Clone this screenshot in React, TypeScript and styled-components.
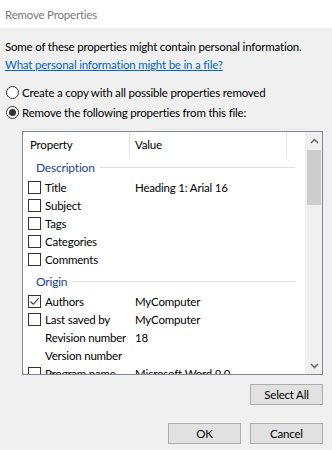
import React from "react";
import styled, { createGlobalStyle } from "styled-components";

const Global = createGlobalStyle`
  html, body { margin: 0; padding: 0; background: #f0f0f0; }
  body { font-family: Lato, "Open Sans", sans-serif; font-size: 11.5px; letter-spacing: -0.2px; color: #000; }
  * { box-sizing: border-box; }
`;

const Window = styled.div`
  width: 332px;
  height: 450px;
  display: flex;
  flex-direction: column;
  background: #f0f0f0;
  overflow: hidden;
`;

const TitleBar = styled.div`
  height: 28px;
  flex: none;
  background: #fff;
  color: #7a7a7a;
  font-size: 11.5px;
  display: flex;
  align-items: center;
  padding-left: 5px;
`;

const Body = styled.div`
  flex: 1;
  display: flex;
  flex-direction: column;
  padding: 10px 9px 0 5px;
`;

const Line = styled.div`
  line-height: 18px;
  height: 18px;
  white-space: nowrap;
`;

const Link = styled.a`
  color: #0066cc;
  text-decoration: underline;
  line-height: 18px;
  height: 18px;
  cursor: pointer;
`;

const Radios = styled.div`
  display: flex;
  flex-direction: column;
  gap: 2px;
  margin-top: 9px;
`;

const RadioRow = styled.label`
  display: flex;
  align-items: center;
  height: 18px;
  gap: 3px;
  padding-left: 1px;
`;

const RadioCircle = styled.span<{ $on?: boolean }>`
  width: 13px;
  height: 13px;
  border-radius: 50%;
  border: 1px solid #333;
  background: #fff;
  display: flex;
  align-items: center;
  justify-content: center;
  &::after {
    content: "";
    width: 7px;
    height: 7px;
    border-radius: 50%;
    background: ${(p) => (p.$on ? "#333" : "transparent")};
  }
`;

const ListBox = styled.div`
  margin: 10px 0 0 17px;
  height: 244px;
  border: 1px solid #828790;
  background: #fff;
  display: flex;
  overflow: hidden;
`;

const ListContent = styled.div`
  flex: 1;
  display: flex;
  flex-direction: column;
  overflow: hidden;
`;

const Header = styled.div`
  height: 25px;
  flex: none;
  display: flex;
`;

const HeaderCell = styled.div<{ $w: number }>`
  width: ${(p) => p.$w}px;
  flex: none;
  padding-left: ${(p) => (p.$w > 110 ? 5 : 7)}px;
  display: flex;
  align-items: center;
  border-right: 1px solid #e5e5e5;
`;

const Group = styled.div<{ $mt?: number }>`
  display: flex;
  align-items: center;
  height: 21px;
  flex: none;
  margin-top: ${(p) => p.$mt ?? 0}px;
  padding: 0 10px 0 13px;
  gap: 5px;
  color: #1e3e94;
  font-size: 12px;
  &::after {
    content: "";
    flex: 1;
    height: 1px;
    background: #e0e0e0;
  }
`;

const Row = styled.div`
  display: flex;
  align-items: center;
  height: 18px;
  flex: none;
  white-space: nowrap;
`;

const NameCell = styled.div`
  width: 112px;
  flex: none;
  display: flex;
  align-items: center;
  gap: 4px;
  padding-left: 5px;
`;

const Box = styled.span<{ $hidden?: boolean }>`
  width: 13px;
  height: 13px;
  flex: none;
  border: 1px solid ${(p) => (p.$hidden ? "transparent" : "#333")};
  background: ${(p) => (p.$hidden ? "transparent" : "#fff")};
  display: flex;
  align-items: center;
  justify-content: center;
`;

const ValueCell = styled.div`
  padding-left: 0;
`;

const Scrollbar = styled.div`
  width: 17px;
  flex: none;
  background: #f0f0f0;
  display: flex;
  flex-direction: column;
  border-left: 1px solid #f0f0f0;
`;

const Arrow = styled.div`
  height: 17px;
  flex: none;
  display: flex;
  align-items: center;
  justify-content: center;
`;

const Track = styled.div`
  flex: 1;
  display: flex;
  flex-direction: column;
  padding: 1px 1px;
`;

const Thumb = styled.div`
  height: 55px;
  background: #cdcdcd;
`;

const ButtonRow = styled.div<{ $mt: number }>`
  display: flex;
  justify-content: flex-end;
  gap: 9px;
  margin-top: ${(p) => p.$mt}px;
  padding-right: 0;
`;

const Button = styled.button`
  width: 73px;
  height: 21px;
  background: #e1e1e1;
  border: 1px solid #adadad;
  font-family: inherit;
  font-size: 11.5px;
  letter-spacing: -0.2px;
  color: #000;
  padding: 0;
  line-height: 18px;
`;

const Check = () => (
  <svg width="11" height="11" viewBox="0 0 11 11">
    <path d="M1.5 5.5 L4.3 8.3 L9.8 2" fill="none" stroke="#333" strokeWidth="1.1" />
  </svg>
);

const ChevronUp = () => (
  <svg width="9" height="6" viewBox="0 0 9 6">
    <path d="M1 5 L4.5 1.5 L8 5" fill="none" stroke="#606060" strokeWidth="1.5" />
  </svg>
);

const ChevronDown = () => (
  <svg width="9" height="6" viewBox="0 0 9 6">
    <path d="M1 1 L4.5 4.5 L8 1" fill="none" stroke="#606060" strokeWidth="1.5" />
  </svg>
);

type Item = { name: string; value?: string; box?: boolean; checked?: boolean };

const description: Item[] = [
  { name: "Title", value: "Heading 1: Arial 16", box: true },
  { name: "Subject", box: true },
  { name: "Tags", box: true },
  { name: "Categories", box: true },
  { name: "Comments", box: true },
];

const origin: Item[] = [
  { name: "Authors", value: "MyComputer", box: true, checked: true },
  { name: "Last saved by", value: "MyComputer", box: true },
  { name: "Revision number", value: "18" },
  { name: "Version number" },
  { name: "Program name", value: "Microsoft Word 9.0", box: true },
];

const ItemRow = ({ item }: { item: Item }) => (
  <Row>
    <NameCell>
      <Box $hidden={!item.box}>{item.checked && <Check />}</Box>
      <span>{item.name}</span>
    </NameCell>
    <ValueCell>{item.value}</ValueCell>
  </Row>
);

export default function App() {
  return (
    <>
      <Global />
      <Window>
        <TitleBar>Remove Properties</TitleBar>
        <Body>
          <Line>Some of these properties might contain personal information.</Line>
          <Link>What personal information might be in a file?</Link>
          <Radios>
            <RadioRow>
              <RadioCircle />
              Create a copy with all possible properties removed
            </RadioRow>
            <RadioRow>
              <RadioCircle $on />
              Remove the following properties from this file:
            </RadioRow>
          </Radios>
          <ListBox>
            <ListContent>
              <Header>
                <HeaderCell $w={107}>Property</HeaderCell>
                <HeaderCell $w={157}>Value</HeaderCell>
              </Header>
              <Group>Description</Group>
              {description.map((d) => (
                <ItemRow key={d.name} item={d} />
              ))}
              <Group $mt={3}>Origin</Group>
              {origin.map((d) => (
                <ItemRow key={d.name} item={d} />
              ))}
            </ListContent>
            <Scrollbar>
              <Arrow>
                <ChevronUp />
              </Arrow>
              <Track>
                <Thumb />
              </Track>
              <Arrow>
                <ChevronDown />
              </Arrow>
            </Scrollbar>
          </ListBox>
          <ButtonRow $mt={9}>
            <Button>Select All</Button>
          </ButtonRow>
          <ButtonRow $mt={18}>
            <Button>OK</Button>
            <Button>Cancel</Button>
          </ButtonRow>
        </Body>
      </Window>
    </>
  );
}
